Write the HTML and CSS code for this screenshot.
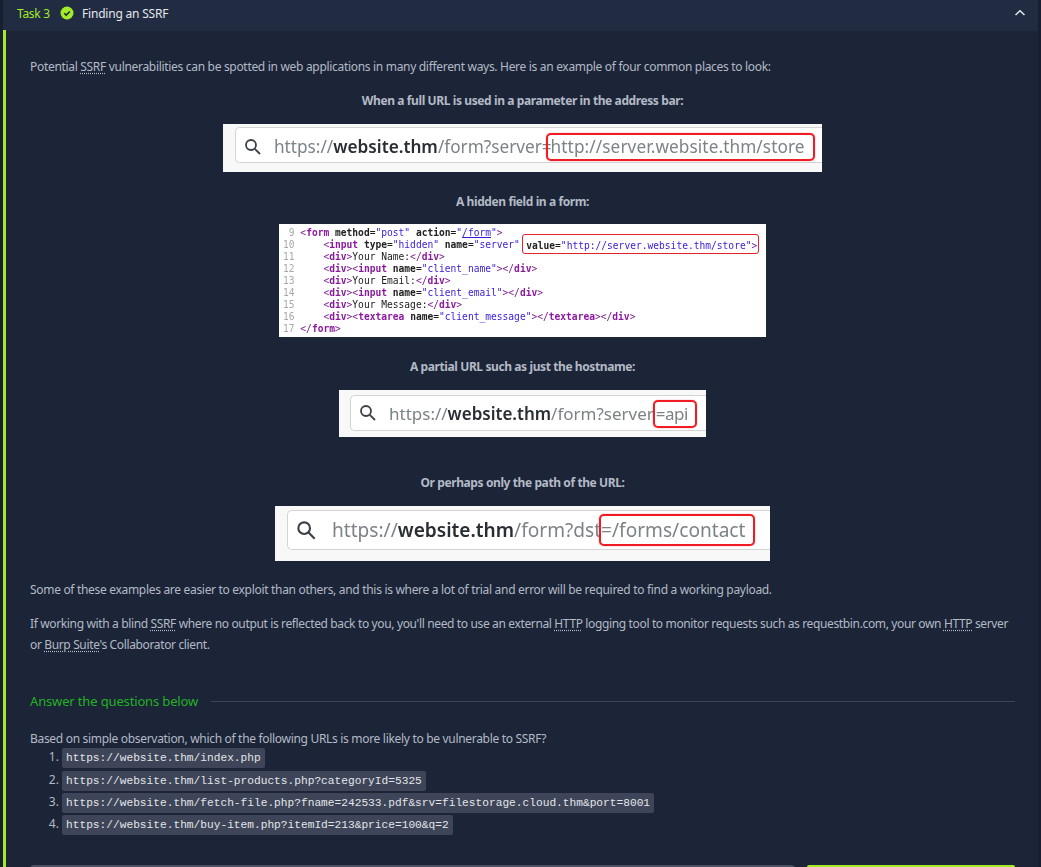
FILE: index.html
```html
<!DOCTYPE html>
<html lang="en">
<head>
<meta charset="utf-8">
<title>Task 3 Finding an SSRF</title>
<link rel="stylesheet" href="styles.css">
</head>
<body>
<div class="card">
  <header class="head">
    <span class="task">Task 3</span>
    <svg class="check" width="14" height="14" viewBox="0 0 14 14"><circle cx="7" cy="7" r="6.5" fill="#a3ea2a"/><path d="M4.2 7.2l2 1.9 3.6-3.7" fill="none" stroke="#1c2538" stroke-width="1.5"/></svg>
    <span class="title">Finding an SSRF</span>
    <svg class="chev" width="12" height="8" viewBox="0 0 12 8"><path d="M1.5 6L6 1.8 10.5 6" fill="none" stroke="#e6e9ef" stroke-width="1.5"/></svg>
  </header>
  <main class="body">
    <p class="p intro">Potential <abbr>SSRF</abbr> vulnerabilities can be spotted in web applications in many different ways. Here is an example of four common places to look:</p>
    <p class="cap c1">When a full URL is used in a parameter in the address bar:</p>
    <div class="shot s1">
      <div class="bar">
        <svg class="mag" width="18" height="18" viewBox="0 0 18 18"><circle cx="7" cy="7" r="5" fill="none" stroke="#3b3f46" stroke-width="1.8"/><path d="M10.8 10.8L16 16" stroke="#3b3f46" stroke-width="1.8"/></svg>
        <span class="url">https://<b>website.thm</b>/form?server=<span class="red">http://server.website.thm/store</span></span>
      </div>
    </div>
    <p class="cap c2">A hidden field in a form:</p>
    <div class="shot s2">
<pre class="code"><i> 9</i> <s>&lt;<b>form</b></s> <u>method</u>=<em>"post"</em> <u>action</u>=<em>"<span class="lnk">/form</span>"</em><s>&gt;</s>
<i>10</i>     <s>&lt;<b>input</b></s> <u>type</u>=<em>"hidden"</em> <u>name</u>=<em>"server"</em> <span class="redc"><u>value</u>=<em>"http://server.website.thm/store"</em><s>&gt;</s></span>
<i>11</i>     <s>&lt;<b>div</b>&gt;</s>Your Name:<s>&lt;/<b>div</b>&gt;</s>
<i>12</i>     <s>&lt;<b>div</b>&gt;&lt;<b>input</b></s> <u>name</u>=<em>"client_name"</em><s>&gt;&lt;/<b>div</b>&gt;</s>
<i>13</i>     <s>&lt;<b>div</b>&gt;</s>Your Email:<s>&lt;/<b>div</b>&gt;</s>
<i>14</i>     <s>&lt;<b>div</b>&gt;&lt;<b>input</b></s> <u>name</u>=<em>"client_email"</em><s>&gt;&lt;/<b>div</b>&gt;</s>
<i>15</i>     <s>&lt;<b>div</b>&gt;</s>Your Message:<s>&lt;/<b>div</b>&gt;</s>
<i>16</i>     <s>&lt;<b>div</b>&gt;&lt;<b>textarea</b></s> <u>name</u>=<em>"client_message"</em><s>&gt;&lt;/<b>textarea</b>&gt;&lt;/<b>div</b>&gt;</s>
<i>17</i> <s>&lt;/<b>form</b>&gt;</s></pre>
    </div>
    <p class="cap c3">A partial URL such as just the hostname:</p>
    <div class="shot s3">
      <div class="bar">
        <svg class="mag" width="18" height="18" viewBox="0 0 18 18"><circle cx="7" cy="7" r="5" fill="none" stroke="#3b3f46" stroke-width="1.8"/><path d="M10.8 10.8L16 16" stroke="#3b3f46" stroke-width="1.8"/></svg>
        <span class="url">https://<b>website.thm</b>/form?server<span class="red">=api</span></span>
      </div>
    </div>
    <p class="cap c4">Or perhaps only the path of the URL:</p>
    <div class="shot s4">
      <div class="bar">
        <svg class="mag" width="21" height="21" viewBox="0 0 18 18"><circle cx="7" cy="7" r="5" fill="none" stroke="#3b3f46" stroke-width="1.8"/><path d="M10.8 10.8L16 16" stroke="#3b3f46" stroke-width="1.8"/></svg>
        <span class="url">https://<b>website.thm</b>/form?dst<span class="red">=/forms/contact</span></span>
      </div>
    </div>
    <p class="p after">Some of these examples are easier to exploit than others, and this is where a lot of trial and error will be required to find a working payload.</p>
    <p class="p blind">If working with a blind <abbr>SSRF</abbr> where no output is reflected back to you, you'll need to use an external <abbr>HTTP</abbr> logging tool to monitor requests such as requestbin.com, your own <abbr>HTTP</abbr> server or <abbr>Burp Suite</abbr>'s Collaborator client.</p>
    <div class="answer"><span>Answer the questions below</span><hr class="rule"></div>
    <p class="p q">Based on simple observation, which of the following URLs is more likely to be vulnerable to SSRF?</p>
    <ol class="list">
      <li><code>https://website.thm/index.php</code></li>
      <li><code>https://website.thm/list-products.php?categoryId=5325</code></li>
      <li><code>https://website.thm/fetch-file.php?fname=242533.pdf&amp;srv=filestorage.cloud.thm&amp;port=8001</code></li>
      <li><code>https://website.thm/buy-item.php?itemId=213&amp;price=100&amp;q=2</code></li>
    </ol>
    <div class="form">
      <div class="input"></div>
      <div class="submit"></div>
    </div>
  </main>
</div>
</body>
</html>
```
FILE: styles.css
```css
* { box-sizing: border-box; }
html, body { margin: 0; height: 867px; overflow: hidden; }
body { background: #181f30; font-family: "Noto Sans", sans-serif; font-size: 12px; letter-spacing: -.31px; color: #b3b9c5; }
.card { margin: 0 3px 0 3px; background: #1c2538; height: 867px; }
.head { height: 31px; background: #212c42; display: flex; align-items: center; padding: 0 12px 5px 14px; }
.task { color: #a3ea2a; width: 43px; }
.check { margin-right: 8px; }
.title { color: #e4e7ec; flex: 1; letter-spacing: -.2px; }
.body { border-left: 3px solid #a3ea2a; margin-top: -1px; padding: 0 23px 0 24px; height: 837px; overflow: hidden; position: relative; }
.p { margin: 0; line-height: 22px; }
.intro { padding-top: 26px; }
abbr { text-decoration: underline dotted; text-underline-offset: 2px; }
.cap { margin: 0; text-align: center; font-weight: 700; line-height: 16px; letter-spacing: -.4px; }
.c1 { margin-top: 15px; }
.c2 { margin-top: 22px; }
.c3 { margin-top: 22px; }
.c4 { margin-top: 38px; }
.shot { background: #fff; margin: 0 auto; overflow: hidden; letter-spacing: 0; }
.s1 { width: 599px; height: 48px; margin-top: 15px; background: #f8f8f8; padding: 3px 0 0 12px; }
.s2 { width: 487px; height: 113px; margin-top: 14px; padding: 3px 0 0 4px; }
.s3 { width: 367px; height: 47px; margin-top: 15px; background: #f8f8f8; padding: 5px 0 0 11px; }
.s4 { width: 495px; height: 55px; margin-top: 15px; background: #f8f8f8; padding: 4px 0 0 12px; }
.bar { display: flex; align-items: center; height: 36px; background: #fff; border: 1px solid #d4d4d4; border-right: 0; border-radius: 5px 0 0 5px; padding-left: 8px; filter: blur(.35px); }
.s1 .bar { padding-top: 3px; }
.s4 .bar { height: 40px; }
.mag { flex: none; margin-right: 12px; }
.s4 .mag { margin-right: 15px; }
.url { font-family: "Noto Sans", sans-serif; font-size: 17.2px; color: #7d8287; white-space: nowrap; }
.s3 .url { font-size: 17px; }
.s4 .url { font-size: 19.1px; }
.url b { color: #2a2d33; font-weight: 600; }
.red { border: 2px solid #f01c24; border-radius: 5px; padding: 0 8px 1px 3px; margin-left: -6px; letter-spacing: .1px; box-shadow: 0 0 1px #f01c24; }
.s3 .red { padding: 0 7px 1px 1px; margin-left: -1px; letter-spacing: -.5px; }
.s4 .red { padding: 1px 8px 1px 0; margin-left: -2px; letter-spacing: 0; }
.code { margin: 0; font-family: "DejaVu Sans Mono", monospace; font-size: 9.6px; line-height: 12px; color: #1a1a1a; white-space: pre; filter: blur(.25px); }
.code i { font-style: normal; color: #a8a8a8; }
.code s { text-decoration: none; color: #7a1d8e; }
.code s b { color: #8b1a9e; }
.code u { text-decoration: none; font-weight: 700; color: #222; }
.code em { font-style: normal; color: #3a18d8; }
.lnk { text-decoration: underline; }
.redc { border: 1.5px solid #e8202a; border-radius: 3px; padding: 4.5px 1px 2.5px 3.5px; margin-left: -4px; }
.after { margin-top: 18px; }
.blind { margin-top: 12px; line-height: 21px; letter-spacing: -.36px; }
.answer { display: flex; align-items: center; gap: 13px; margin-top: 37px; color: #23b123; font-size: 13px; letter-spacing: -.15px; line-height: 18px; }
.rule { flex: 1; margin: 0; border: 0; border-top: 1px solid #3a4358; }
.q { margin-top: 20px; line-height: 18px; }
.list { margin: 0; padding: 0 0 0 32px; letter-spacing: 0; }
.list li { line-height: 22px; height: 22px; }
.list li:first-child { margin-top: -2px; height: 23px; }
code { font-family: "Liberation Mono", monospace; font-size: 11.2px; color: #e2e5ea; background: #3e4558; border-radius: 2px; padding: 4px 4px; }
.form { display: flex; gap: 12px; margin-top: 30px; margin-right: -2px; }
.input { width: 765px; height: 12px; background: #4a5162; border-radius: 4px 4px 0 0; }
.submit { width: 208px; height: 12px; background: #a3ea2a; border-radius: 2px 2px 0 0; }
```
